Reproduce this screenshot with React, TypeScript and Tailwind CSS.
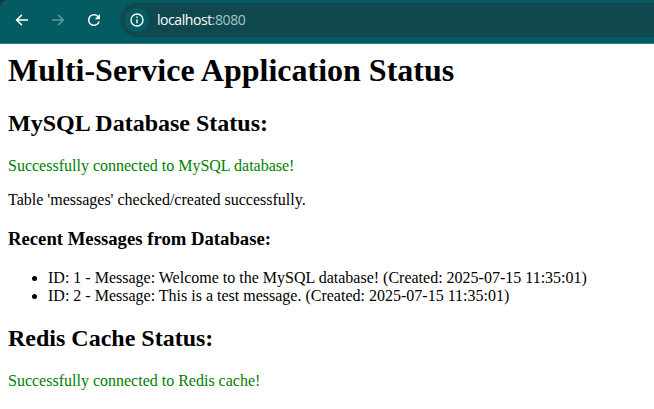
import React from "react";

const messages = [
  { id: 1, text: "Welcome to the MySQL database!", created: "2025-07-15 11:35:01" },
  { id: 2, text: "This is a test message.", created: "2025-07-15 11:35:01" },
];

function BrowserBar() {
  return (
    <div className="bg-[linear-gradient(to_bottom,#12383d_50%,#3a777f_50%)]">
      <header className="flex h-11 items-start rounded-tl-[7px] border-b border-[#3a777f] bg-[#045c62] font-['Open_Sans',sans-serif]">
        <nav className="flex h-10 w-[120px] shrink-0 items-center gap-5 pl-[14px] text-white">
          <svg className="size-4" viewBox="0 0 16 16" fill="none" stroke="currentColor" strokeWidth="1.6">
            <path d="M14 8H3M8 2.7 2.7 8 8 13.3" />
          </svg>
          <svg className="size-4 text-[#5f9a9d]" viewBox="0 0 16 16" fill="none" stroke="currentColor" strokeWidth="1.6">
            <path d="M2 8h11M8 2.7 13.3 8 8 13.3" />
          </svg>
          <svg className="-mx-px size-[18px]" viewBox="0 0 24 24" fill="currentColor">
            <path d="M17.65 6.35A7.95 7.95 0 0 0 12 4a8 8 0 1 0 7.73 10h-2.08A6 6 0 1 1 12 6c1.66 0 3.14.69 4.22 1.78L13 11h7V4z" />
          </svg>
        </nav>
        <div className="mt-[3px] flex h-[34px] flex-1 items-center rounded-l-full bg-[#0f494f] pl-[5px]">
          <span className="flex size-6 items-center justify-center rounded-full bg-[#045c62] text-white">
            <svg className="size-4" viewBox="0 0 16 16" fill="none" stroke="currentColor" strokeWidth="1.4">
              <circle cx="8" cy="8" r="6" />
              <path d="M8 7.3v4M8 4.5V6" />
            </svg>
          </span>
          <span className="ml-2 text-[14px] tracking-[-0.43px] text-white">
            localhost<span className="text-[#a9c4c6]">:8080</span>
          </span>
        </div>
      </header>
    </div>
  );
}

export default function App() {
  return (
    <div className="h-[409px] overflow-hidden bg-white text-[16px] leading-[18px] text-black font-['Liberation_Serif',serif]">
      <BrowserBar />
      <main className="px-2 pt-2">
        <h1 className="text-[32px] leading-[37px] font-bold">Multi-Service Application Status</h1>
        <h2 className="mt-[21px] text-[24px] leading-[27px] font-bold">MySQL Database Status:</h2>
        <p className="mt-5 text-[#008000]">Successfully connected to MySQL database!</p>
        <p className="mt-4">Table 'messages' checked/created successfully.</p>
        <h3 className="mt-[19px] text-[18.72px] leading-[21px] font-bold">Recent Messages from Database:</h3>
        <ul className="mt-5 list-disc pl-10">
          {messages.map((m) => (
            <li key={m.id}>ID: {m.id} - Message: {m.text} (Created: {m.created})</li>
          ))}
        </ul>
        <h2 className="mt-5 text-[24px] leading-[27px] font-bold">Redis Cache Status:</h2>
        <p className="mt-5 text-[#008000]">Successfully connected to Redis cache!</p>
      </main>
    </div>
  );
}
